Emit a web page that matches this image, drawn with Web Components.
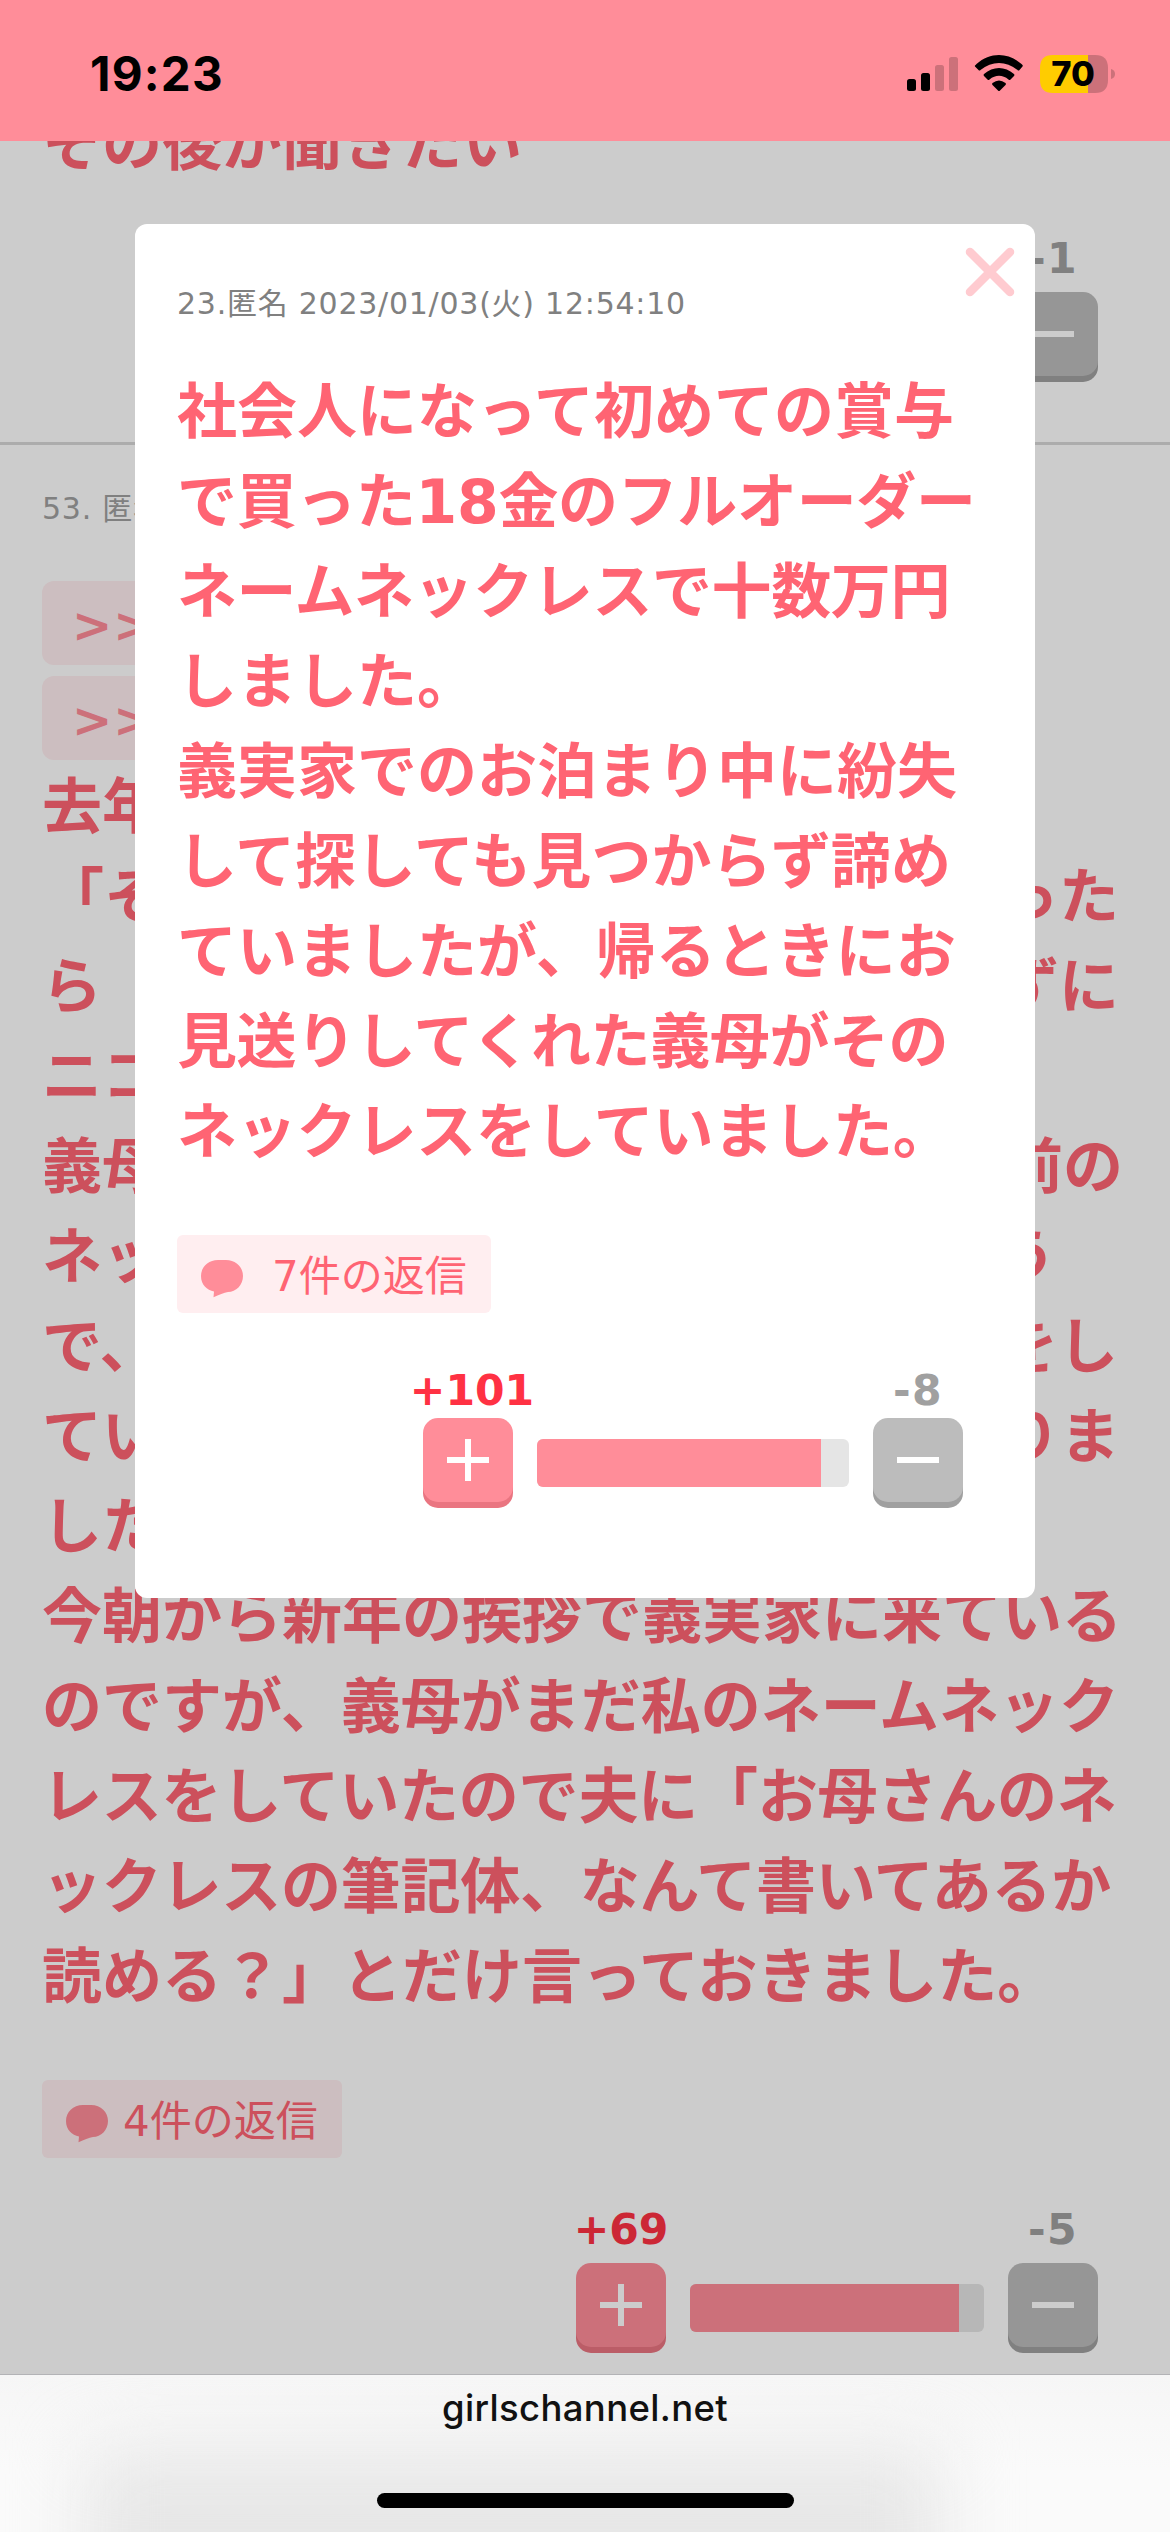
<!DOCTYPE html>
<html lang="ja"><head><meta charset="utf-8"><title>girlschannel.net</title>
<style>
html,body{margin:0;padding:0}
body{width:1170px;height:2532px;overflow:hidden;background:#fff;font-family:"DejaVu Sans","Noto Sans CJK JP",sans-serif}
</style></head><body>
<gc-app></gc-app>
<script>
const define=(name,html)=>customElements.define(name,class extends HTMLElement{
  connectedCallback(){
    if(this.shadowRoot)return;
    const r=this.attachShadow({mode:"open"});
    r.innerHTML=typeof html==="function"?html(this):html;
  }
});

define("status-bar",`<style>
:host{display:flex;box-sizing:border-box;width:1170px;height:141px;background:#ff8d99;justify-content:space-between;padding:0 55px 0 90px;color:#000}
.t{font:700 47.500px/60px Inter,sans-serif;margin-top:44px;letter-spacing:1.200px}
.i{display:flex;margin-top:50px;height:50px}
svg{display:block}
</style><div class="t">19:23</div>
<div class="i"><svg width="208" height="50" viewBox="907 50 208 50">
<g fill="#000"><rect x="907" y="79" width="9" height="12" rx="2.5"/><rect x="921" y="73" width="9" height="18" rx="2.5"/></g>
<g fill="#cc717a"><rect x="935" y="65" width="9" height="26" rx="2.5"/><rect x="949" y="57" width="9" height="34" rx="2.5"/></g>
<path d="M975 65.500Q976 64.500 976.500 64C990 52 1008 52 1021.500 64Q1023.500 65.500 1022.500 66.500L1019.500 70Q1018.500 71 1017.500 70C1006 60.500 992 60.500 980.500 70Q979.500 71 978.500 70L975.500 67Q974.500 66 975 65.500Z"/>
<path d="M984 74C993 66 1005 66 1014 74Q1015 75 1014 76L1010.500 79.500Q1009.500 80.500 1008.500 79.500C1002.500 74.500 995.500 74.500 989.500 79.500Q988.500 80.500 987.500 79.500L984 76Q983 75 984 74Z"/>
<path d="M992.500 83Q999 78 1005.500 83Q1006.500 84 1005.500 85L1000 90.500Q999 91.500 998 90.500L992.500 85Q991.500 84 992.500 83Z"/>
<path fill="#cc717a" d="M1088 55h7q13 0 13 13v12q0 13-13 13h-7z"/>
<path fill="#fc0" d="M1088 55h-35q-13 0-13 13v12q0 13 13 13h35z"/>
<path fill="#cc717a" d="M1111 69q4 1 4 5t-4 5z"/>
<text x="1073" y="86" text-anchor="middle" font-family="Inter" font-weight="800" font-size="34.500">70</text>
</svg></div>`);

define("close-icon",`<style>:host{display:block}svg{display:block}</style>
<svg width="50" height="50" viewBox="0 0 50 50"><path d="M5 5L45 45M45 5L5 45" stroke="#ffcbd0" stroke-width="8.500" stroke-linecap="round"/></svg>`);

define("reply-count",`<style>
:host{display:flex;box-sizing:border-box;height:78px;align-items:center;background:#ffeef0;border-radius:6px;padding-left:24px;color:#ff6473;font-size:42px;line-height:78px;white-space:nowrap}
svg{display:block;flex:none;margin-top:9px}
span{margin:5px 0 0 var(--gap,29px)}
</style><svg width="42" height="38" viewBox="0 0 42 38"><path fill="#ff8d99" d="M17 0h8C35 0 42 7 42 16S35 32 27 32c-4 .3-9 3-14.500 5.200L13 31.500C6 30 0 25 0 16S7 0 17 0Z"/></svg>
<span><slot></slot></span>`);

define("vote-button",h=>`<style>
:host{display:flex;flex:none;width:90px;height:84px;border-radius:15px;background:${h.hasAttribute("minus")?"#bcbcbc":"#ff8d99"};box-shadow:0 6px 0 ${h.hasAttribute("minus")?"#a0a0a0":"#ea7581"};align-items:center;justify-content:center}
svg{display:block}
</style><svg width="42" height="42" viewBox="0 0 42 42"><path fill="#fff" d="${h.hasAttribute("minus")?"M0 18h42v6H0z":"M0 18h18V0h6v18h18v6H24v18h-6V24H0z"}"/></svg>`);

define("vote-panel",h=>`<style>
:host{display:flex;justify-content:flex-end;gap:24px;color:#ff3143}
.c{display:flex;flex-direction:column;align-items:center;width:90px;height:calc(138px + var(--lift,0px));justify-content:space-between}
.n{font-size:42.500px;line-height:54px;font-weight:700;white-space:nowrap}
.p .n{padding-left:var(--nudge,0px)}
.m .n{color:#a0a0a0;letter-spacing:1.500px}
.b{align-self:flex-end;display:flex;width:${h.getAttribute("bar")}px;height:48px;margin-bottom:15px;background:#e5e5e5;border-radius:6px;overflow:hidden}
.b i{width:${h.getAttribute("fill")}px;background:#ff8d99}
</style>
<div class="c p"><div class="n">${h.getAttribute("plus")}</div><vote-button></vote-button></div>
<div class="b"><i></i></div>
<div class="c m"><div class="n">${h.getAttribute("minus")}</div><vote-button minus></vote-button></div>`);

define("text-line",h=>`<style>
:host{display:flex;justify-content:space-between;height:90px;line-height:93px;white-space:nowrap}
</style><span><slot></slot></span><span><slot name="end"></slot></span>`);

define("comment-body",`<style>
:host{display:block;font-size:60px;font-weight:700;color:#ff6473;font-family:"DejaVu Sans","Noto Sans CJK JP",sans-serif}
</style><slot></slot>`);

define("quote-link",`<style>
:host{display:block;box-sizing:border-box;width:300px;height:84px;margin-bottom:11px;border-radius:12px;background:#ffeef0;color:#ff8d99;padding-left:30px;font-size:48px;line-height:88px;font-weight:700;letter-spacing:1px}
</style><slot></slot>`);

define("comment-modal",`<style>
:host{position:absolute;left:135px;top:83px;width:900px;height:1374px;box-sizing:border-box;background:#fff;border-radius:12px;padding:0 42px}
.x{position:absolute;right:20px;top:23px}
.meta{height:142px;box-sizing:border-box;padding-top:59px;font-size:30px;line-height:42px;letter-spacing:.75px;color:#808080}
.r{display:flex;margin-top:59px}
vote-panel{--nudge:8px;margin-top:51px;padding-right:30px}
</style>
<div class="x"><close-icon></close-icon></div>
<div class="meta">23.匿名 2023/01/03(火) 12:54:10</div>
<comment-body>
<text-line>社会人になって初めての賞与</text-line>
<text-line style="letter-spacing:-.35px">で買った18金のフルオーダー</text-line>
<text-line style="letter-spacing:-.4px">ネームネックレスで十数万円</text-line>
<text-line>しました。</text-line>
<text-line>義実家でのお泊まり中に紛失</text-line>
<text-line style="letter-spacing:.15px">して探しても見つからず諦め</text-line>
<text-line>ていましたが、帰るときにお</text-line>
<text-line style="letter-spacing:-.4px">見送りしてくれた義母がその</text-line>
<text-line style="letter-spacing:-.2px">ネックレスをしていました。</text-line>
</comment-body>
<div class="r"><reply-count style="width:314px">7件の返信</reply-count></div>
<vote-panel plus="+101" minus="-8" bar="312" fill="284"></vote-panel>`);

define("comment-page",`<style>
:host{display:block;position:relative;overflow:hidden;background:#fff}
.in{padding:0 42px;margin-top:-43px}
vote-panel{--lift:6px;padding-right:30px}
.hr{height:3px;background:#d8d8d8;margin:0 -42px}
.meta{font-size:30px;line-height:42px;color:#a0a0a0;height:136px;box-sizing:border-box;padding-top:43px;letter-spacing:.75px}
.r{display:flex;margin:59px 0 45px}
reply-count{--gap:15px}
.q{margin-bottom:-10px}
</style><div class="in">
<comment-body><text-line>その後が聞きたい</text-line></comment-body>
<vote-panel style="margin-top:44px" plus="" minus="-1" bar="294" fill="294"></vote-panel>
<div class="hr" style="margin-top:66px"></div>
<div class="meta">53. 匿名</div>
<div class="q"><quote-link>&gt;&gt;</quote-link><quote-link>&gt;&gt;</quote-link></div>
<comment-body>
<text-line>去年</text-line>
<text-line style="padding:0 9px 0 2px">「そ<span slot="end">った</span></text-line>
<text-line style="padding-right:9px">ら<span slot="end">ずに</span></text-line>
<text-line>ニコ</text-line>
<text-line style="padding-right:5px">義母<span slot="end">前の</span></text-line>
<text-line style="padding-right:12px">ネッ<span slot="end">う&#12288;</span></text-line>
<text-line style="padding-right:10px">で、<span slot="end">をし</span></text-line>
<text-line style="padding-right:8px">てい<span slot="end">りま</span></text-line>
<text-line>した</text-line>
<text-line>今朝から新年の挨拶で義実家に来ている</text-line>
<text-line>のですが、義母がまだ私のネームネック</text-line>
<text-line style="letter-spacing:-.2px">レスをしていたので夫に「お母さんのネ</text-line>
<text-line style="letter-spacing:-.25px">ックレスの筆記体、なんて書いてあるか</text-line>
<text-line>読める？」とだけ言っておきました。</text-line>
</comment-body>
<div class="r"><reply-count style="width:300px">4件の返信</reply-count></div>
<vote-panel plus="+69" minus="-5" bar="294" fill="269"></vote-panel>
</div>`);

define("browser-bar",`<style>
:host{display:flex;position:relative;overflow:hidden;flex-direction:column;align-items:center;box-sizing:border-box;height:158px;border-top:1px solid #b3b3b6;background:linear-gradient(#f6f6f6,#fafafa 60%)}
:host::before{content:"";position:absolute;left:85px;right:230px;top:75px;bottom:-100px;background:#e7e7e7;filter:blur(36px)}
.u{position:relative;font:500 36.500px/48px Inter,sans-serif;color:#111;margin-top:9px;letter-spacing:.35px}
.h{position:relative;width:417px;height:15px;border-radius:8px;background:#000;margin-top:61px}
</style><div class="u">girlschannel.net</div><div class="h"></div>`);

define("gc-app",`<style>
:host{display:flex;flex-direction:column;width:1170px;height:2532px}
.v{position:relative;height:2233px;overflow:hidden}
.d{position:absolute;inset:0;background:rgba(0,0,0,.2)}
comment-page{height:2233px}
</style><status-bar></status-bar>
<div class="v"><comment-page></comment-page><div class="d"></div><comment-modal></comment-modal></div>
<browser-bar></browser-bar>`);
</script></body></html>
